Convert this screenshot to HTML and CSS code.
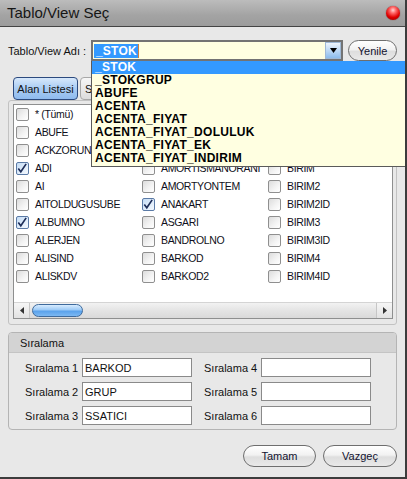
FILE: index.html
```html
<!DOCTYPE html>
<html>
<head>
<meta charset="utf-8">
<link rel="stylesheet" href="styles.css">
</head>
<body>
<div class="window">
  <div class="titlebar">
    <span class="title">Tablo/View Seç</span>
    <span class="orb"></span>
  </div>
  <div class="body">
    <div class="combo-row">
      <span class="combo-label">Tablo/View Adı :</span>
      <div class="combo">
        <span class="combo-text">_STOK</span>
        <span class="combo-btn"><svg width="7" height="5" viewBox="0 0 7 5"><path d="M0 0H7L3.5 5Z" fill="#000"/></svg></span>
      </div>
      <button class="btn yenile">Yenile</button>
    </div>

    <div class="tabs">
      <div class="tab active">Alan Listesi</div>
      <div class="tab second-tab">Sorgu</div>
    </div>

    <div class="panel">
      <div class="list">
        <div class="grid">
          <div class="cell"><span class="cb"></span><span>* (Tümü)</span></div>
          <div class="cell"><span class="cb"></span><span>ABUFE</span></div>
          <div class="cell"><span class="cb"></span><span>ACKZORUNLU</span></div>
          <div class="cell"><span class="cb checked"><svg width="13" height="13" viewBox="0 0 13 13"><path d="M2.5 6.5L5.2 10L11 1.5" fill="none" stroke="#1d2d58" stroke-width="1.8"/></svg></span><span>ADI</span></div>
          <div class="cell"><span class="cb"></span><span>AI</span></div>
          <div class="cell"><span class="cb"></span><span>AITOLDUGUSUBE</span></div>
          <div class="cell"><span class="cb checked"><svg width="13" height="13" viewBox="0 0 13 13"><path d="M2.5 6.5L5.2 10L11 1.5" fill="none" stroke="#1d2d58" stroke-width="1.8"/></svg></span><span>ALBUMNO</span></div>
          <div class="cell"><span class="cb"></span><span>ALERJEN</span></div>
          <div class="cell"><span class="cb"></span><span>ALISIND</span></div>
          <div class="cell"><span class="cb"></span><span>ALISKDV</span></div>

          <div class="cell"><span class="cb"></span></div>
          <div class="cell"><span class="cb"></span></div>
          <div class="cell"><span class="cb"></span></div>
          <div class="cell"><span class="cb"></span><span>AMORTISMANORANI</span></div>
          <div class="cell"><span class="cb"></span><span>AMORTYONTEM</span></div>
          <div class="cell"><span class="cb checked"><svg width="13" height="13" viewBox="0 0 13 13"><path d="M2.5 6.5L5.2 10L11 1.5" fill="none" stroke="#1d2d58" stroke-width="1.8"/></svg></span><span>ANAKART</span></div>
          <div class="cell"><span class="cb"></span><span>ASGARI</span></div>
          <div class="cell"><span class="cb"></span><span>BANDROLNO</span></div>
          <div class="cell"><span class="cb"></span><span>BARKOD</span></div>
          <div class="cell"><span class="cb"></span><span>BARKOD2</span></div>

          <div class="cell"><span class="cb"></span></div>
          <div class="cell"><span class="cb"></span></div>
          <div class="cell"><span class="cb"></span></div>
          <div class="cell"><span class="cb"></span><span>BIRIM</span></div>
          <div class="cell"><span class="cb"></span><span>BIRIM2</span></div>
          <div class="cell"><span class="cb"></span><span>BIRIM2ID</span></div>
          <div class="cell"><span class="cb"></span><span>BIRIM3</span></div>
          <div class="cell"><span class="cb"></span><span>BIRIM3ID</span></div>
          <div class="cell"><span class="cb"></span><span>BIRIM4</span></div>
          <div class="cell"><span class="cb"></span><span>BIRIM4ID</span></div>
        </div>
        <div class="hscroll">
          <span class="sbtn"><svg width="4" height="7" viewBox="0 0 4 7"><path d="M4 0V7L0 3.5Z" fill="#333"/></svg></span>
          <span class="thumb"></span>
          <span class="sbtn right"><svg width="4" height="7" viewBox="0 0 4 7"><path d="M0 0V7L4 3.5Z" fill="#333"/></svg></span>
        </div>
      </div>
    </div>

    <div class="group">
      <div class="group-head">Sıralama</div>
      <div class="group-body">
        <span class="slabel">Sıralama 1</span><span class="input">BARKOD</span>
        <span class="slabel second">Sıralama 4</span><span class="input"></span>
        <span class="slabel">Sıralama 2</span><span class="input">GRUP</span>
        <span class="slabel second">Sıralama 5</span><span class="input"></span>
        <span class="slabel">Sıralama 3</span><span class="input">SSATICI</span>
        <span class="slabel second">Sıralama 6</span><span class="input"></span>
      </div>
    </div>

    <div class="buttons">
      <button class="btn ok">Tamam</button>
      <button class="btn cancel">Vazgeç</button>
    </div>
  </div>

  <div class="dropdown">
    <div class="ditem sel">_STOK</div>
    <div class="ditem">_STOKGRUP</div>
    <div class="ditem">ABUFE</div>
    <div class="ditem">ACENTA</div>
    <div class="ditem">ACENTA_FIYAT</div>
    <div class="ditem">ACENTA_FIYAT_DOLULUK</div>
    <div class="ditem">ACENTA_FIYAT_EK</div>
    <div class="ditem">ACENTA_FIYAT_INDIRIM</div>
  </div>
</div>
</body>
</html>
```

FILE: styles.css
```css
* { box-sizing: border-box; }

html, body {
  margin: 0;
  padding: 0;
  width: 407px;
  height: 479px;
  overflow: hidden;
  background: #e8e8e8;
  font-family: "Liberation Sans", Arial, sans-serif;
  font-size: 11px;
  color: #111;
}

.window {
  position: relative;
  width: 407px;
  height: 479px;
  background: #e8e8e8;
  border-right: 2px solid #3c3c3c;
  border-bottom: 2px solid #3c3c3c;
  display: flex;
  flex-direction: column;
}

.titlebar {
  height: 27px;
  flex: none;
  background: linear-gradient(#bcbcbc, #a3a3a3 60%, #9c9c9c);
  border-bottom: 1px solid #444;
  display: flex;
  align-items: center;
  padding-left: 7px;
  padding-right: 5px;
}

.title {
  font-size: 15px;
  color: #161616;
  flex: 1;
  padding-bottom: 1px;
}

.orb {
  width: 14px;
  height: 14px;
  border-radius: 50%;
  background: radial-gradient(circle at 50% 30%, #ffd6d6 0, #ff6a6a 25%, #e00000 60%, #8a0000 100%);
  box-shadow: 0 0 1px #600;
  margin-bottom: 1px;
}

.body {
  flex: 1;
  display: flex;
  flex-direction: column;
  padding: 0 8px;
}

.combo-row {
  display: flex;
  align-items: center;
  margin-top: 13px;
  height: 21px;
}

.combo-label {
  width: 83px;
  flex: none;
}

.combo {
  width: 253px;
  height: 21px;
  border: 2px solid #737373;
  background: #ffffe1;
  display: flex;
  align-items: center;
  padding-left: 1px;
}

.combo-text {
  background: #3399ff;
  color: #fff;
  font-weight: bold;
  font-size: 12px;
  letter-spacing: 0.2px;
  height: 14px;
  line-height: 14px;
  padding: 0 1px 0 2px;
  border-right: 1px solid #d08040;
}

.combo-btn {
  margin-left: auto;
  width: 16px;
  height: 17px;
  background: linear-gradient(#eef5fc, #b9d6f4 55%, #8cbcec);
  border: 1px solid #9fb9d6;
  display: flex;
  align-items: center;
  justify-content: center;
}

.btn {
  font-family: "Liberation Sans", Arial, sans-serif;
  font-size: 11px;
  color: #121230;
  border: 1px solid #6e6e6e;
  border-radius: 11px;
  background: linear-gradient(#ffffff, #f2f2f2 45%, #dedede 55%, #e9e9e9);
  padding: 0;
  margin: 0;
}

.yenile {
  margin-left: 5px;
  width: 49px;
  height: 21px;
}

.tabs {
  display: flex;
  margin-top: 16px;
  height: 23px;
  padding-left: 5px;
  gap: 2px;
}

.tab {
  width: 65px;
  height: 23px;
  border: 1px solid #8a8a8a;
  border-radius: 4px;
  background: linear-gradient(#f6f6f6, #dcdcdc);
  display: flex;
  align-items: center;
  justify-content: center;
  color: #111;
}

.tab.second-tab {
  justify-content: flex-start;
  padding-left: 4px;
  border-color: #a8a8a8;
}

.tab.active {
  border-color: #2c4a7e;
  background: linear-gradient(#d7e8fb, #a9ccf4 50%, #8fbbee);
}

.panel {
  height: 225px;
  border: 1px solid #c2c2c2;
  border-radius: 3px;
  padding: 3px 4px 5px 4px;
}

.list {
  width: 380px;
  height: 215px;
  border: 1px solid #8e8f8f;
  background: #fff;
  display: flex;
  flex-direction: column;
}

.grid {
  height: 197px;
  overflow: hidden;
  padding-left: 2px;
  display: grid;
  grid-template-rows: repeat(10, 18px);
  grid-auto-flow: column;
  grid-auto-columns: 126px;
  align-content: start;
}

.cell {
  display: flex;
  align-items: center;
  gap: 6px;
  white-space: nowrap;
  font-size: 10.5px;
  letter-spacing: -0.35px;
  color: #101020;
  overflow: hidden;
}

.cb {
  width: 13px;
  height: 13px;
  flex: none;
  border: 1px solid #8f8f8f;
  border-radius: 2px;
  background: linear-gradient(135deg, #dcdcdc, #f4f4f4 60%, #ffffff);
  display: flex;
}

.cb.checked {
  border-color: #5a7aa6;
  background: linear-gradient(135deg, #c4dcf5, #e2eefb 60%, #f4f8fd);
}

.cb svg {
  margin: -1px 0 0 -1px;
}

.hscroll {
  height: 16px;
  display: flex;
  align-items: center;
  background: linear-gradient(#f2f2f2, #e4e4e4 50%, #d9d9d9);
  border-top: 1px solid #d4d4d4;
}

.sbtn {
  width: 16px;
  height: 15px;
  display: flex;
  align-items: center;
  justify-content: center;
  border-right: 1px solid #c6c6c6;
  background: linear-gradient(#f6f6f6, #e2e2e2);
}

.sbtn.right {
  margin-left: auto;
  border-right: none;
  border-left: 1px solid #c6c6c6;
}

.thumb {
  margin-left: 2px;
  width: 51px;
  height: 13px;
  border-radius: 7px;
  border: 1px solid #3e6a9c;
  background: linear-gradient(#d8ecff, #9ccaf6 45%, #5aa2ec 55%, #7cb8f2);
}

.group {
  margin-top: 7px;
  border: 1px solid #b4b4b4;
  border-radius: 4px;
  overflow: hidden;
}

.group-head {
  height: 20px;
  background: #d3d3d3;
  border-bottom: 1px solid #c4c4c4;
  padding-left: 11px;
  display: flex;
  align-items: center;
}

.group-body {
  display: grid;
  grid-template-columns: 57px 110px 69px 110px;
  grid-auto-rows: 19px;
  row-gap: 5px;
  padding: 5px 0 4px 16px;
  align-items: center;
}

.slabel.second {
  padding-left: 12px;
}

.input {
  height: 19px;
  border: 1px solid #8a8a8a;
  background: #fff;
  padding-left: 2px;
  display: flex;
  align-items: center;
  color: #111;
}

.buttons {
  display: flex;
  justify-content: flex-end;
  gap: 7px;
  margin-top: 15px;
}

.ok {
  width: 73px;
  height: 22px;
}

.cancel {
  width: 74px;
  height: 22px;
}

.dropdown {
  position: absolute;
  left: 91px;
  top: 61px;
  width: 314px;
  height: 106px;
  background: #ffffe1;
  border: 1px solid #5a5a5a;
  border-right: none;
  border-top: none;
  font-weight: bold;
  font-size: 12px;
  letter-spacing: 0.3px;
  color: #000;
}

.ditem {
  height: 13px;
  line-height: 13px;
  padding-left: 3px;
  white-space: nowrap;
}

.ditem.sel {
  background: #3399ff;
  color: #fff;
}
```
